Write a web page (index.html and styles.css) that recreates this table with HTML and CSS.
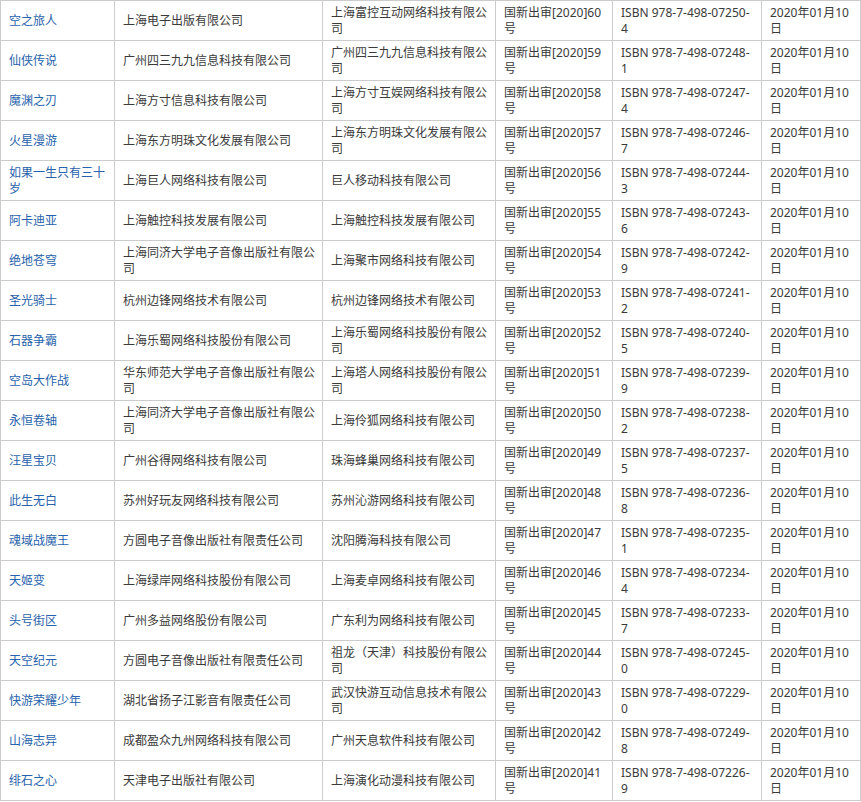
FILE: index.html
```html
<!DOCTYPE html>
<html lang="zh-CN">
<head>
<meta charset="utf-8">
<title>游戏审批列表</title>
<link rel="stylesheet" href="styles.css">
</head>
<body>
<table class="list">
<colgroup>
<col class="c1"><col class="c2"><col class="c3"><col class="c4"><col class="c5"><col class="c6">
</colgroup>
<tbody>
<tr><td class="name">空之旅人</td><td>上海电子出版有限公司</td><td>上海富控互动网络科技有限公司</td><td>国新出审[2020]60号</td><td>ISBN 978-7-498-07250-4</td><td>2020年01月10日</td></tr>
<tr><td class="name">仙侠传说</td><td>广州四三九九信息科技有限公司</td><td>广州四三九九信息科技有限公司</td><td>国新出审[2020]59号</td><td>ISBN 978-7-498-07248-1</td><td>2020年01月10日</td></tr>
<tr><td class="name">魔渊之刃</td><td>上海方寸信息科技有限公司</td><td>上海方寸互娱网络科技有限公司</td><td>国新出审[2020]58号</td><td>ISBN 978-7-498-07247-4</td><td>2020年01月10日</td></tr>
<tr><td class="name">火星漫游</td><td>上海东方明珠文化发展有限公司</td><td>上海东方明珠文化发展有限公司</td><td>国新出审[2020]57号</td><td>ISBN 978-7-498-07246-7</td><td>2020年01月10日</td></tr>
<tr><td class="name">如果一生只有三十岁</td><td>上海巨人网络科技有限公司</td><td>巨人移动科技有限公司</td><td>国新出审[2020]56号</td><td>ISBN 978-7-498-07244-3</td><td>2020年01月10日</td></tr>
<tr><td class="name">阿卡迪亚</td><td>上海触控科技发展有限公司</td><td>上海触控科技发展有限公司</td><td>国新出审[2020]55号</td><td>ISBN 978-7-498-07243-6</td><td>2020年01月10日</td></tr>
<tr><td class="name">绝地苍穹</td><td>上海同济大学电子音像出版社有限公司</td><td>上海聚市网络科技有限公司</td><td>国新出审[2020]54号</td><td>ISBN 978-7-498-07242-9</td><td>2020年01月10日</td></tr>
<tr><td class="name">圣光骑士</td><td>杭州边锋网络技术有限公司</td><td>杭州边锋网络技术有限公司</td><td>国新出审[2020]53号</td><td>ISBN 978-7-498-07241-2</td><td>2020年01月10日</td></tr>
<tr><td class="name">石器争霸</td><td>上海乐蜀网络科技股份有限公司</td><td>上海乐蜀网络科技股份有限公司</td><td>国新出审[2020]52号</td><td>ISBN 978-7-498-07240-5</td><td>2020年01月10日</td></tr>
<tr><td class="name">空岛大作战</td><td>华东师范大学电子音像出版社有限公司</td><td>上海塔人网络科技股份有限公司</td><td>国新出审[2020]51号</td><td>ISBN 978-7-498-07239-9</td><td>2020年01月10日</td></tr>
<tr><td class="name">永恒卷轴</td><td>上海同济大学电子音像出版社有限公司</td><td>上海伶狐网络科技有限公司</td><td>国新出审[2020]50号</td><td>ISBN 978-7-498-07238-2</td><td>2020年01月10日</td></tr>
<tr><td class="name">汪星宝贝</td><td>广州谷得网络科技有限公司</td><td>珠海蜂巢网络科技有限公司</td><td>国新出审[2020]49号</td><td>ISBN 978-7-498-07237-5</td><td>2020年01月10日</td></tr>
<tr><td class="name">此生无白</td><td>苏州好玩友网络科技有限公司</td><td>苏州沁游网络科技有限公司</td><td>国新出审[2020]48号</td><td>ISBN 978-7-498-07236-8</td><td>2020年01月10日</td></tr>
<tr><td class="name">魂域战魔王</td><td>方圆电子音像出版社有限责任公司</td><td>沈阳腾海科技有限公司</td><td>国新出审[2020]47号</td><td>ISBN 978-7-498-07235-1</td><td>2020年01月10日</td></tr>
<tr><td class="name">天姬变</td><td>上海绿岸网络科技股份有限公司</td><td>上海麦卓网络科技有限公司</td><td>国新出审[2020]46号</td><td>ISBN 978-7-498-07234-4</td><td>2020年01月10日</td></tr>
<tr><td class="name">头号街区</td><td>广州多益网络股份有限公司</td><td>广东利为网络科技有限公司</td><td>国新出审[2020]45号</td><td>ISBN 978-7-498-07233-7</td><td>2020年01月10日</td></tr>
<tr><td class="name">天空纪元</td><td>方圆电子音像出版社有限责任公司</td><td>祖龙（天津）科技股份有限公司</td><td>国新出审[2020]44号</td><td>ISBN 978-7-498-07245-0</td><td>2020年01月10日</td></tr>
<tr><td class="name">快游荣耀少年</td><td>湖北省扬子江影音有限责任公司</td><td>武汉快游互动信息技术有限公司</td><td>国新出审[2020]43号</td><td>ISBN 978-7-498-07229-0</td><td>2020年01月10日</td></tr>
<tr><td class="name">山海志异</td><td>成都盈众九州网络科技有限公司</td><td>广州天息软件科技有限公司</td><td>国新出审[2020]42号</td><td>ISBN 978-7-498-07249-8</td><td>2020年01月10日</td></tr>
<tr><td class="name">绯石之心</td><td>天津电子出版社有限公司</td><td>上海演化动漫科技有限公司</td><td>国新出审[2020]41号</td><td>ISBN 978-7-498-07226-9</td><td>2020年01月10日</td></tr>
</tbody>
</table>
</body>
</html>
```

FILE: styles.css
```css
html, body {
  margin: 0;
  padding: 0;
  background: #ffffff;
}

body {
  font-family: "Noto Sans", "Noto Sans CJK SC", sans-serif;
  font-size: 12px;
  line-height: 16px;
  color: #3a3a3a;
}

.list {
  border-collapse: collapse;
  table-layout: fixed;
  width: 860px;
}

.c1 { width: 114px; }
.c2 { width: 208px; }
.c3 { width: 173px; }
.c4 { width: 117px; }
.c5 { width: 149px; }
.c6 { width: 99px; }

.list td {
  border: 1px solid #cccccc;
  padding: 4px 6px 3px 8px;
  height: 32px;
  vertical-align: middle;
  text-align: left;
  word-break: break-all;
}

.list td.name {
  color: #2862ac;
}
```
